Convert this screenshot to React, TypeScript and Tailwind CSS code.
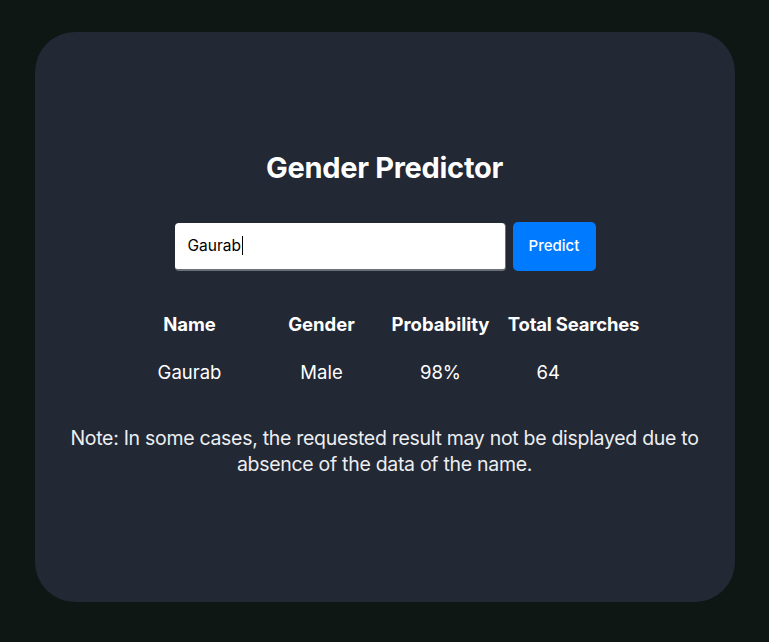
import React from "react";

export default function App() {
  return (
    <div className="w-[769px] h-[642px] bg-[#0f1715] flex items-start justify-center pt-[32px]" style={{ fontFamily: "Inter, 'Noto Sans', sans-serif" }}>
      <div className="w-[700px] h-[570px] bg-[#222834] rounded-[40px] flex flex-col items-center pt-[117px]">
        <h1 className="text-[29px] leading-[38px] font-bold text-white tracking-[-0.3px]">Gender Predictor</h1>
        <div className="flex items-center gap-[7px] mt-[35px] ml-[1px]">
          <div className="w-[331px] h-[48px] bg-white rounded-[4px] border-b-2 border-r border-[#6b6f76] flex items-center pl-[13px]">
            <span className="text-[15.5px] text-black">Gaurab</span>
            <span className="w-[1px] h-[19px] bg-black ml-[1px]"></span>
          </div>
          <button className="w-[83px] h-[49px] bg-[#007bff] rounded-[5px] text-white text-[15px] font-medium">Predict</button>
        </div>
        <div className="mt-[42px] ml-[8px] flex flex-col text-white text-[18.5px]">
          <div className="flex font-bold h-[24px] items-center">
            <div className="w-[132px] text-center">Name</div>
            <div className="w-[132px] text-center">Gender</div>
            <div className="w-[106px] text-center">Probability</div>
            <div className="w-[160px] text-center tracking-[-0.2px]">Total Searches</div>
          </div>
          <div className="flex h-[24px] items-center mt-[24px]">
            <div className="w-[132px] text-center">Gaurab</div>
            <div className="w-[132px] text-center">Male</div>
            <div className="w-[106px] text-center">98%</div>
            <div className="w-[160px] text-left pl-[43px]">64</div>
          </div>
        </div>
        <p className="mt-[40px] w-[640px] text-center text-[19.5px] leading-[26px] text-[#eceef1] tracking-[-0.3px]">
          Note: In some cases, the requested result may not be displayed due to absence of the data of the name.
        </p>
      </div>
    </div>
  );
}
